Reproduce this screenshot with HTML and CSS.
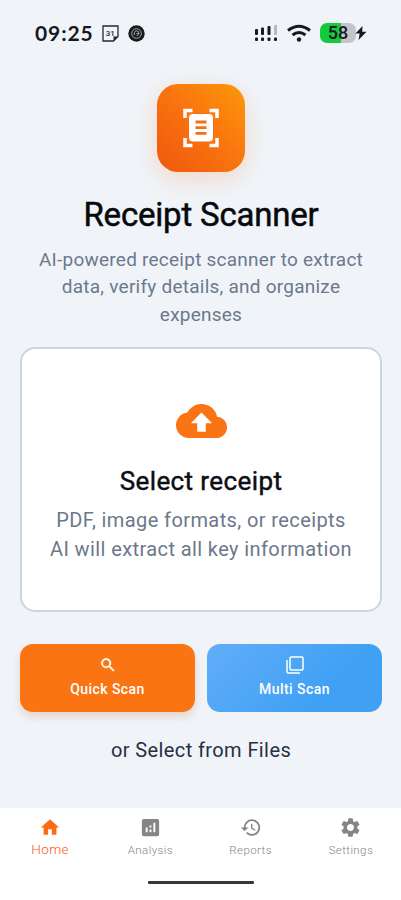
FILE: index.html
```html
<!DOCTYPE html>
<html lang="en">
<head>
<meta charset="utf-8">
<meta name="viewport" content="width=device-width, initial-scale=1">
<title>Receipt Scanner</title>
<link rel="stylesheet" href="styles.css">
</head>
<body>
<div class="screen">
  <header class="status">
    <span class="time">09:25</span>
    <svg class="calendar" width="17" height="17" viewBox="0 0 17 17"><path d="M1 1h15v10.500l-4.500 4.500H1z" fill="none" stroke="#25282b" stroke-width="1.300"/><path d="M11.500 16v-4.500H16z" fill="#25282b"/><text x="8.300" y="11.200" text-anchor="middle" class="date">31</text></svg>
    <svg class="disc" width="17" height="17" viewBox="0 0 17 17"><circle cx="8.500" cy="8.500" r="8.200" fill="#17191b"/><circle cx="8.500" cy="8.500" r="4.800" fill="none" stroke="#a5a8aa" stroke-width="1"/><path d="M6.300 10V7.800a2.300 2.300 0 1 1 2.300 2.700M8.500 8.500h2.300" fill="none" stroke="#a5a8aa"/></svg>
    <span class="spacer"></span>
    <svg class="signal" width="24" height="18" viewBox="0 0 24 18"><g fill="#17191b"><rect x="1" y="5" width="3" height="6" rx="1"/><rect x="7" y="3.500" width="3" height="7.500" rx="1"/><rect x="13.500" y="2" width="3" height="9" rx="1"/><rect x="1" y="13.500" width="3" height="3.500" rx="1"/><rect x="7" y="13.500" width="3" height="3.500" rx="1"/><rect x="13.500" y="13.500" width="3" height="3.500" rx="1"/><rect x="20" y="13.500" width="3" height="3.500" rx="1"/></g><rect x="20" y="1" width="3" height="10" rx="1" fill="#b5b8bc"/></svg>
    <svg class="wifi" width="24" height="18" viewBox="0 0 24 18"><g fill="none" stroke="#17191b" stroke-width="3"><path d="M1 6.500q11-8.500 22 0"/><path d="M5.500 11q6.500-5 13 0"/></g><circle cx="12" cy="15.500" r="2.200" fill="#17191b"/></svg>
    <span class="battery">58</span>
    <svg class="bolt" width="12" height="14" viewBox="0 0 12 14"><path d="M7.500 0 .5 7.500h4.200L3.500 14l8-8.300H7.200z" fill="#17191b"/></svg>
  </header>

  <main class="content">
    <div class="logo">
      <svg width="36" height="40" viewBox="0 0 36 40"><path d="M2 10V2.500h7.500M26.500 2.500H34V10M34 30v7.500h-7.500M9.500 37.500H2V30" fill="none" stroke="#fff" stroke-width="3.500"/><rect x="5.500" y="5.500" width="25" height="28.500" rx="4" fill="#fff" stroke="#f67012"/><path d="M12.500 14h11M12.500 19.700h11M12.500 25.400h11" stroke="#f67012" stroke-width="2.800"/></svg>
    </div>
    <h1 class="title">Receipt Scanner</h1>
    <p class="intro">AI-powered receipt scanner to extract<br>data, verify details, and organize<br>expenses</p>

    <section class="upload">
      <svg class="cloud" width="51" height="52" viewBox="0 0 24 24"><path fill="#fa7414" d="M19.350 10.040A7.490 7.490 0 0 0 12 4C9.110 4 6.600 5.640 5.350 8.040A5.994 5.994 0 0 0 0 14c0 3.310 2.690 6 6 6h13c2.760 0 5-2.240 5-5 0-2.640-2.050-4.780-4.650-4.960zM14 13v4h-4v-4H7l5-5 5 5h-3z"/></svg>
      <h2 class="upload-title">Select receipt</h2>
      <p class="upload-text">PDF, image formats, or receipts<br>AI will extract all key information</p>
    </section>

    <div class="actions">
      <div class="action quick">
        <svg width="18" height="18" viewBox="0 0 24 24"><path fill="#fff" stroke="#fff" stroke-width=".5" d="M15.500 14h-.79l-.28-.27A6.471 6.471 0 0 0 16 9.500 6.500 6.500 0 1 0 9.500 16c1.610 0 3.090-.59 4.230-1.570l.27.28v.79l5 4.990L20.490 19l-4.990-5zm-6 0C7.010 14 5 11.990 5 9.500S7.010 5 9.500 5 14 7.010 14 9.500 11.990 14 9.500 14z"/></svg>
        <span>Quick Scan</span>
      </div>
      <div class="action multi">
        <svg width="18" height="18" viewBox="0 0 18 18"><rect x="4" y="1" width="13" height="13" rx="1.200" fill="none" stroke="#fff" stroke-width="1.500"/><path d="M1 4v11.500q0 1.500 1.500 1.500H14" fill="none" stroke="#fff" stroke-width="1.500"/></svg>
        <span>Multi Scan</span>
      </div>
    </div>
    <p class="files">or Select from Files</p>
  </main>

  <footer class="bottom">
    <nav class="tabs">
      <div class="tab active"><svg width="22" height="22" viewBox="0 0 24 24"><path fill="currentColor" d="M10 20v-6h4v6h5v-8h3L12 3 2 12h3v8z"/></svg><span>Home</span></div>
      <div class="tab"><svg width="23" height="23" viewBox="0 0 24 24"><path fill="currentColor" d="M19 3H5a2 2 0 0 0-2 2v14c0 1.100.9 2 2 2h14c1.100 0 2-.9 2-2V5a2 2 0 0 0-2-2zM9 17H7v-5h2v5zm4 0h-2v-3h2v3zm0-5h-2v-2h2v2zm4 5h-2V7h2v10z"/></svg><span>Analysis</span></div>
      <div class="tab"><svg width="22" height="22" viewBox="0 0 24 24"><path fill="currentColor" d="M13 3a9 9 0 0 0-9 9H1l3.890 3.890.07.14L9 12H6a7 7 0 1 1 2.060 4.940l-1.420 1.420A9 9 0 1 0 13 3zm-1 5v5l4.280 2.540.72-1.210-3.500-2.080V8H12z"/></svg><span>Reports</span></div>
      <div class="tab"><svg width="23" height="23" viewBox="0 0 24 24"><path fill="currentColor" d="M19.140 12.940c.04-.3.060-.61.060-.94s-.02-.64-.07-.94l2.030-1.580a.49.49 0 0 0 .12-.61l-1.920-3.320a.488.488 0 0 0-.59-.22l-2.390.96c-.5-.38-1.030-.7-1.620-.94l-.36-2.540a.484.484 0 0 0-.48-.41h-3.840c-.24 0-.43.17-.47.41l-.36 2.540c-.59.24-1.130.57-1.620.94l-2.390-.96c-.22-.08-.47 0-.59.22L2.740 8.870c-.12.21-.08.47.12.61l2.030 1.580c-.05.3-.09.63-.09.94s.02.64.07.94l-2.030 1.580a.49.49 0 0 0-.12.61l1.920 3.320c.12.22.37.29.59.22l2.390-.96c.5.38 1.030.7 1.620.94l.36 2.540c.05.24.24.41.48.41h3.840c.24 0 .44-.17.47-.41l.36-2.540c.59-.24 1.130-.56 1.620-.94l2.390.96c.22.08.47 0 .59-.22l1.920-3.320c.12-.22.070-.47-.12-.61l-2.010-1.580zM12 15.600A3.610 3.610 0 0 1 8.400 12c0-1.980 1.620-3.600 3.600-3.600s3.600 1.620 3.600 3.600-1.620 3.600-3.600 3.600z"/></svg><span>Settings</span></div>
    </nav>
    <div class="handle"></div>
  </footer>
</div>
</body>
</html>
```
FILE: styles.css
```css
* { box-sizing: border-box; }
body, h1, h2, p { margin: 0; }
body { font-family: Roboto, sans-serif; background: #f0f4f9; }
svg { display: block; flex: none; }
.screen { width: 401px; height: 900px; display: flex; flex-direction: column; overflow: hidden; }

.status { height: 66px; padding: 0 34px 0 35px; display: flex; align-items: center; flex: none; color: #17191b; }
.time { font: 700 21px/24px Lato, sans-serif; letter-spacing: .9px; }
.calendar { margin-left: 8px; }
.date { font: 500 8px Roboto, sans-serif; fill: #25282b; }
.disc { margin-left: 9px; }
.spacer { flex: 1; }
.wifi { margin-left: 9px; }
.battery { width: 36px; height: 20px; margin-left: 9px; border-radius: 7px; background: linear-gradient(90deg, #14c93c 58%, #c4c5ca 58%); font: 500 18px/20px Roboto, sans-serif; text-align: center; }
.bolt { margin-left: -1px; }

.content { flex: 1; padding: 18px 19px 0 20px; display: flex; flex-direction: column; align-items: center; text-align: center; }
.logo { width: 88px; height: 88px; border-radius: 21px; display: grid; place-items: center; background: linear-gradient(45deg, #ee580c, #f97310 50%, #fc9807); box-shadow: 0 7px 24px rgba(249, 115, 22, .22); flex: none; }
.title { margin-top: 23px; font-size: 33px; line-height: 40px; font-weight: 400; letter-spacing: -.2px; -webkit-text-stroke: .5px #07090d; color: #07090d; white-space: nowrap; }
.intro { margin-top: 11px; font-size: 19px; line-height: 27.300px; letter-spacing: .24px; color: #6c788b; white-space: nowrap; }

.upload { width: 362px; height: 265px; margin-top: 19px; padding-top: 46px; border: 2px solid #cbd5e1; border-radius: 15px; background: #fff; display: flex; flex-direction: column; align-items: center; flex: none; }
.upload-title { margin-top: 18px; font-size: 26px; line-height: 32px; font-weight: 400; letter-spacing: .4px; -webkit-text-stroke: .45px #0b0e14; color: #0b0e14; }
.upload-text { margin-top: 9px; font-size: 20px; line-height: 29px; letter-spacing: .4px; color: #6c788b; white-space: nowrap; }

.actions { width: 362px; margin-top: 32px; display: grid; grid-template-columns: 1fr 1fr; gap: 12px; }
.action { height: 68px; padding-top: 12px; border-radius: 13px; display: flex; flex-direction: column; align-items: center; color: #fff; font-size: 14px; line-height: 18px; font-weight: 500; letter-spacing: .45px; gap: 6px; }
.quick { background: #fb7414; box-shadow: 0 5px 10px rgba(190, 90, 30, .2); }
.multi { background: linear-gradient(135deg, #62aef9, #3fa0f4 70%); }
.files { margin-top: 25px; font-size: 20px; line-height: 26px; letter-spacing: .4px; color: #273040; }

.bottom { height: 92px; flex: none; background: #fff; display: flex; flex-direction: column; align-items: center; }
.tabs { width: 401px; height: 73px; padding-top: 8px; display: grid; grid-template-columns: repeat(4, 1fr); }
.tab { display: flex; flex-direction: column; align-items: center; color: #858585; font-size: 11.500px; font-weight: 300; letter-spacing: .4px; line-height: 16px; }
.tab svg { height: 23px; }
.tab span { margin-top: 3px; }
.active { color: #fb6d14; font-size: 13.500px; }
.active span { margin-top: 2px; color: #fa5a20; }
.handle { width: 106px; height: 3px; border-radius: 1px; background: #36383b; }
```
